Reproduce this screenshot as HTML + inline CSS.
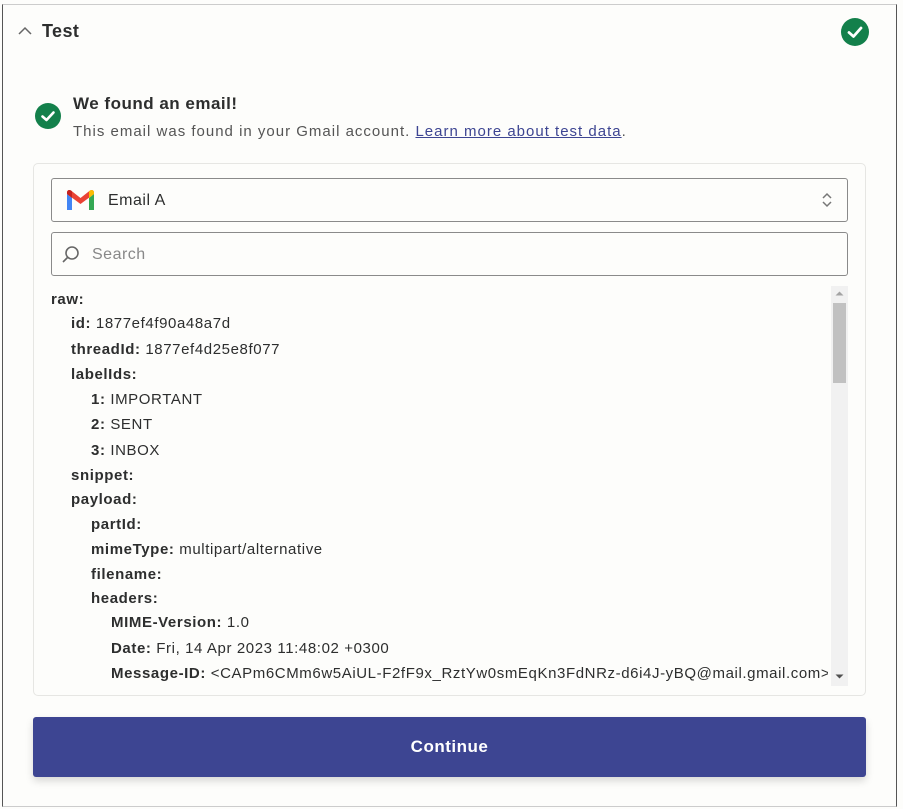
<!DOCTYPE html>
<html><head><style>
*{margin:0;padding:0;box-sizing:border-box}
body{width:903px;height:809px;background:#fdfdfb;font-family:"Liberation Sans",sans-serif;color:#2d2e2e;position:relative;overflow:hidden}
.frame{position:absolute;left:2px;top:4px;width:895px;height:803px;border-left:1px solid #555;border-right:1px solid #555;border-top:1px solid #ccc;border-bottom:1px solid #ccc}
.abs{position:absolute}
.line{position:absolute;font-size:15px;white-space:nowrap;line-height:18px;letter-spacing:0.6px}
.line b{font-weight:bold}
</style></head><body>
<div class="frame"></div>
<svg class="abs" style="left:17px;top:26px" width="16" height="10"><path d="M2 8 L8 2 L14 8" fill="none" stroke="#666" stroke-width="1.5"/></svg>
<div class="abs" style="left:42px;top:21px;font-size:18px;font-weight:bold;color:#2d2e2e;letter-spacing:0.4px">Test</div>
<svg class="abs" style="left:841px;top:18px" width="28" height="28"><circle cx="14" cy="14" r="14" fill="#13804b"/><path d="M8 14.5 L12.5 18.5 L20 10" fill="none" stroke="#fff" stroke-width="2.8" stroke-linecap="round" stroke-linejoin="round"/></svg>
<svg class="abs" style="left:35px;top:103px" width="26" height="26"><circle cx="13" cy="13" r="13" fill="#13804b"/><path d="M7.5 13.5 L11.5 17 L18.5 9.5" fill="none" stroke="#fff" stroke-width="2.6" stroke-linecap="round" stroke-linejoin="round"/></svg>
<div class="abs" style="left:73px;top:94px;font-size:17px;font-weight:bold;letter-spacing:0.5px">We found an email!</div>
<div class="abs" style="left:73px;top:123px;font-size:15px;color:#555;letter-spacing:1px;white-space:nowrap">This email was found in your Gmail account. <span style="color:#3d4592;text-decoration:underline">Learn more about test data</span>.</div>
<div class="abs" style="left:33px;top:163px;width:833px;height:533px;border:1px solid #e6e6e3;border-radius:5px"></div>
<div class="abs" style="left:51px;top:178px;width:797px;height:44px;border:1px solid #8a8a8a;border-radius:3px"></div>
<svg class="abs" style="left:66px;top:189px" width="29" height="22" viewBox="0 0 29 22"><path d="M1 5 V21 H6 V9 Z" fill="#4285f4"/><path d="M28 5 V21 H23 V9 Z" fill="#34a853"/><path d="M1 5 L14.5 15 L28 5 L28 3 Q27 0 24 1.5 L14.5 9 L5 1.5 Q2 0 1 3 Z" fill="#ea4335"/><path d="M23 9 L28 5 V3 Q27 0 24 1.5 L23 2.5 Z" fill="#fbbc04"/><path d="M6 9 L1 5 V3 Q2 0 5 1.5 L6 2.5 Z" fill="#c5221f"/></svg>
<div class="abs" style="left:108px;top:192px;font-size:16px;letter-spacing:0.5px">Email A</div>
<svg class="abs" style="left:820px;top:191px" width="14" height="18"><path d="M3 7 L7 3 L11 7 M3 11 L7 15 L11 11" fill="none" stroke="#777" stroke-width="1.5"/></svg>
<div class="abs" style="left:51px;top:232px;width:797px;height:44px;border:1px solid #8a8a8a;border-radius:3px"></div>
<svg class="abs" style="left:61px;top:244px" width="20" height="20"><circle cx="11" cy="9" r="6" fill="none" stroke="#666" stroke-width="1.6"/><path d="M6.5 13.5 L2 18" stroke="#666" stroke-width="1.6"/></svg>
<div class="abs" style="left:92px;top:246px;font-size:16px;color:#888;letter-spacing:0.5px">Search</div>
<div class="abs" style="left:831px;top:286px;width:17px;height:400px;background:#f1f1f1"></div>
<div class="abs" style="left:833px;top:303px;width:13px;height:80px;background:#c1c1c1"></div>
<svg class="abs" style="left:835px;top:290px" width="9" height="7"><path d="M0.5 5.5 L4.5 1.5 L8.5 5.5Z" fill="#a3a3a3"/></svg>
<svg class="abs" style="left:835px;top:673px" width="9" height="7"><path d="M0.5 1.5 L4.5 5.5 L8.5 1.5Z" fill="#505050"/></svg>
<div class="line" style="left:51px;top:291px"><b>raw:</b></div>
<div class="line" style="left:71px;top:315px"><b>id:</b> 1877ef4f90a48a7d</div>
<div class="line" style="left:71px;top:341px"><b>threadId:</b> 1877ef4d25e8f077</div>
<div class="line" style="left:71px;top:366px"><b>labelIds:</b></div>
<div class="line" style="left:91px;top:391px"><b>1:</b> IMPORTANT</div>
<div class="line" style="left:91px;top:416px"><b>2:</b> SENT</div>
<div class="line" style="left:91px;top:442px"><b>3:</b> INBOX</div>
<div class="line" style="left:71px;top:467px"><b>snippet:</b></div>
<div class="line" style="left:71px;top:491px"><b>payload:</b></div>
<div class="line" style="left:91px;top:516px"><b>partId:</b></div>
<div class="line" style="left:91px;top:541px"><b>mimeType:</b> multipart/alternative</div>
<div class="line" style="left:91px;top:566px"><b>filename:</b></div>
<div class="line" style="left:91px;top:590px"><b>headers:</b></div>
<div class="line" style="left:111px;top:614px"><b>MIME-Version:</b> 1.0</div>
<div class="line" style="left:111px;top:640px"><b>Date:</b> Fri, 14 Apr 2023 11:48:02 +0300</div>
<div class="line" style="left:111px;top:665px;width:717px;overflow:hidden"><b>Message-ID:</b> &lt;CAPm6CMm6w5AiUL-F2fF9x_RztYw0smEqKn3FdNRz-d6i4J-yBQ@mail.gmail.com&gt;</div>
<div class="abs" style="left:33px;top:717px;width:833px;height:60px;background:#3d4592;border-radius:3px;box-shadow:0 4px 8px rgba(0,0,0,.15);color:#fff;font-size:17px;font-weight:bold;text-align:center;line-height:60px;letter-spacing:0.5px">Continue</div>
</body></html>
